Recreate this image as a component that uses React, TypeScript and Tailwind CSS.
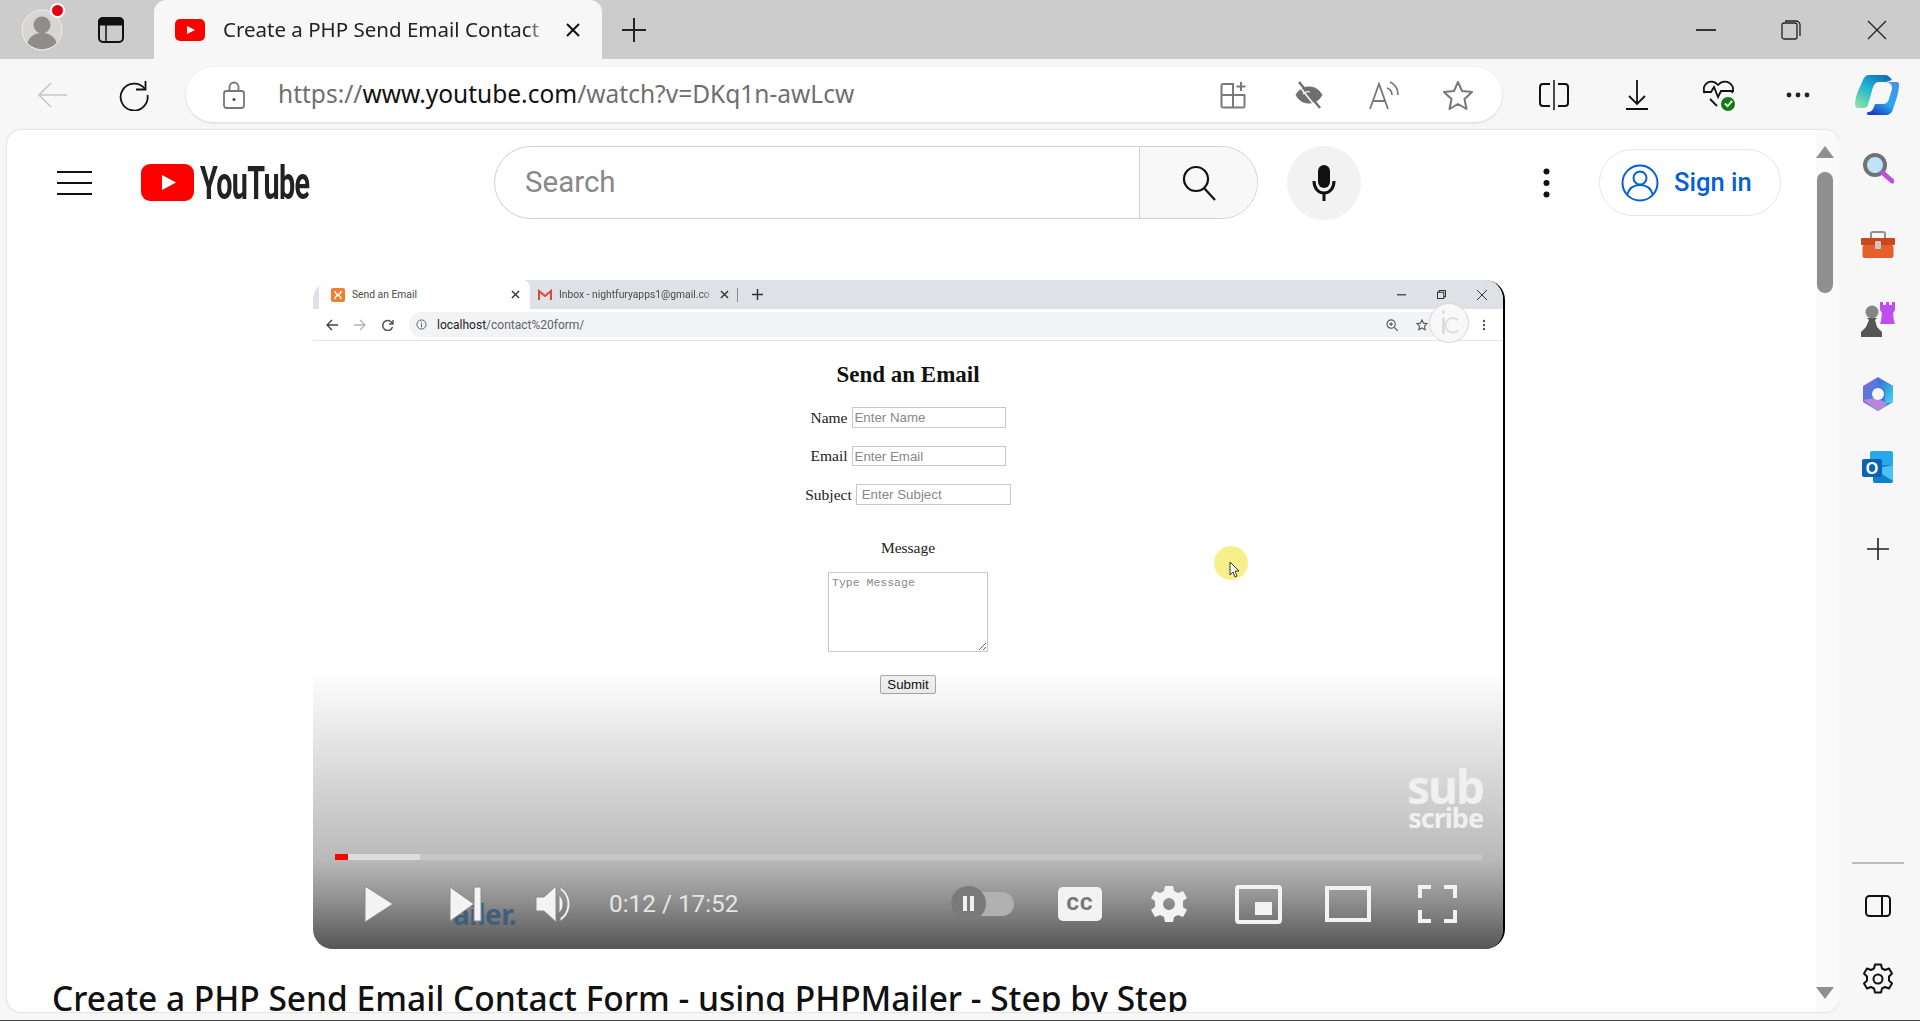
const TabStrip = () => (
  <div className="flex h-[59px] items-center bg-[#cccccc]">
    <div className="relative ml-[21px] h-[42px] w-[42px]">
      <svg viewBox="0 0 42 42" className="h-[42px] w-[42px]">
        <circle cx="21" cy="21" r="20" fill="#d8d6d3" stroke="#eeeeee" />
        <circle cx="21" cy="16" r="8.500" fill="#8f8c89" />
        <path d="M6.500 34c2-7 8-10 14.500-10s12.500 3 14.500 10a20 20 0 0 1-29 0z" fill="#8f8c89" />
      </svg>
      <span className="absolute right-[-2px] top-[-6px] h-[15px] w-[15px] rounded-full border-2 border-white bg-[#e3000f]"></span>
    </div>
    <svg viewBox="0 0 26 26" className="ml-[35px] h-[26px] w-[26px]" fill="none" stroke="#111111" strokeWidth="2">
      <rect x="1" y="1" width="24" height="24" rx="4" />
      <path d="M8 7v18" strokeWidth="1.500" />
      <path d="M4 1.500h18a3 3 0 0 1 3 3v3H1v-3a3 3 0 0 1 3-3z" fill="#111111" />
    </svg>
    <div className="ml-[30px] flex h-[59px] w-[448px] items-center rounded-t-[12px] bg-[#f7f7f7] pl-[21px]">
      <svg viewBox="0 0 30 22" className="h-[22px] w-[30px] shrink-0">
        <rect width="30" height="22" rx="5" fill="#ff0000" />
        <path d="M12 7l8 4-8 4z" fill="#ffffff" />
      </svg>
      <span className="ml-[18px] w-[326px] overflow-hidden whitespace-nowrap font-['Noto_Sans',sans-serif] text-[20.500px] text-[#222222] [mask-image:linear-gradient(to_right,black_93%,transparent)]">
        Create a PHP Send Email Contact
      </span>
      <svg viewBox="0 0 16 16" className="ml-[16px] h-[16px] w-[16px]" stroke="#111111" strokeWidth="2">
        <path d="M2 2l12 12M14 2L2 14" />
      </svg>
    </div>
    <svg viewBox="0 0 26 26" className="ml-[19px] h-[26px] w-[26px]" stroke="#222222" strokeWidth="2">
      <path d="M13 1v24M1 13h24" />
    </svg>
    <svg viewBox="0 0 20 2" className="ml-[1049px] h-[2px] w-[20px]">
      <rect width="20" height="2" fill="#333333" />
    </svg>
    <svg viewBox="0 0 20 20" className="ml-[65px] h-[20px] w-[20px]" fill="none" stroke="#222222" strokeWidth="1.300">
      <rect x="1" y="3" width="15" height="16" rx="2" />
      <path d="M4 1h11a4 4 0 0 1 4 4v11" />
    </svg>
    <svg viewBox="0 0 20 20" className="ml-[66px] h-[20px] w-[20px]" stroke="#222222" strokeWidth="1.300">
      <path d="M1 1l18 18M19 1L1 19" />
    </svg>
  </div>
)

const AddressBar = () => (
  <div className="ml-[36px] flex h-[55px] w-[1316px] items-center rounded-full bg-white pl-[37px] shadow-[0_1px_3px_rgba(0,0,0,0.12)]">
    <svg viewBox="0 0 22 28" className="h-[28px] w-[22px]" fill="none" stroke="#777777" strokeWidth="1.800">
      <rect x="1" y="10" width="20" height="17" rx="2.500" />
      <path d="M6.500 10V6a4.500 4.500 0 0 1 9 0v4" />
      <circle cx="11" cy="18.500" r="1.500" fill="#444444" stroke="none" />
    </svg>
    <span className="ml-[33px] w-[720px] whitespace-nowrap font-['Noto_Sans',sans-serif] text-[24.500px] text-[#6f6f6f]">
      https://<span className="text-[#111111]">www.youtube.com</span>/watch?v=DKq1n-awLcw
    </span>
    <svg viewBox="0 0 28 28" className="ml-[222px] h-[28px] w-[28px]" fill="none" stroke="#7a7a7a" strokeWidth="2">
      <path d="M13 3H3a1.500 1.500 0 0 0-1.500 1.500V25A1.500 1.500 0 0 0 3 26.500h20a1.500 1.500 0 0 0 1.500-1.500V14H13V3zM13 14H1.500M13 14v12.500" />
      <path d="M21 1v9M16.500 5.500h9" />
    </svg>
    <svg viewBox="0 0 30 30" className="ml-[46px] h-[30px] w-[30px]" fill="none" stroke="#707070">
      <path d="M2 15C6 8 11 7 15 7s9 1 13 8c-4 7-9 8-13 8S6 22 2 15z" fill="#707070" />
      <path d="M5 2l21 26" stroke="#707070" strokeWidth="2.500" />
      <path d="M3 3.500l21 26" stroke="#ffffff" strokeWidth="1.500" />
      <path d="M9 14c2-2 4-3 7-2" stroke="#f3f3f3" strokeWidth="1.200" />
    </svg>
    <svg viewBox="0 0 32 30" className="ml-[45px] h-[30px] w-[32px]" fill="none" stroke="#777777" strokeWidth="1.800">
      <path d="M1 29L10 4l9 25M4 21h12" />
      <path d="M18 8c3 1 5 4 5 7M21 2c5 2 8 7 8 13" />
    </svg>
    <svg viewBox="0 0 30 30" className="ml-[42px] h-[30px] w-[30px]" fill="none" stroke="#777777" strokeWidth="2">
      <path d="M15 2l4 9 10 1-7.500 7 2 10-8.500-5-8.500 5 2-10L1 12l10-1z" strokeLinejoin="round" />
    </svg>
  </div>
)

const Toolbar = () => (
  <div className="flex h-[71px] items-center bg-[#f7f7f7]">
    <svg viewBox="0 0 30 26" className="ml-[37px] h-[26px] w-[30px]" fill="none" stroke="#c8c8c8" strokeWidth="1.700">
      <path d="M30 13H2M14 1L2 13l12 12" />
    </svg>
    <svg viewBox="0 0 32 32" className="ml-[51px] h-[32px] w-[32px]" fill="none" stroke="#111111" strokeWidth="1.800">
      <path d="M27.500 2v8.500H18" />
      <path d="M27 10A13.500 13.500 0 1 0 29.500 16" />
    </svg>
    <AddressBar />
    <svg viewBox="0 0 30 30" className="ml-[37px] h-[30px] w-[30px]" fill="none" stroke="#111111" strokeWidth="2">
      <path d="M11 4H4a3 3 0 0 0-3 3v16a3 3 0 0 0 3 3h7M19 4h7a3 3 0 0 1 3 3v16a3 3 0 0 1-3 3h-7" />
      <path d="M15 0v30" strokeWidth="1.500" />
    </svg>
    <svg viewBox="0 0 22 30" className="ml-[57px] h-[30px] w-[22px]" fill="none" stroke="#111111" strokeWidth="1.800">
      <path d="M11 0v24M3 16l8 8 8-8M0 29h22" />
    </svg>
    <div className="relative ml-[54px] h-[32px] w-[33px]">
      <svg viewBox="0 0 33 32" className="h-[32px] w-[33px]" fill="none" stroke="#111111" strokeWidth="1.800">
        <path d="M15 27L8 20M3 14C-2 6 9-2 16 6c7-8 19 0 14 8" />
        <path d="M1 13h8l3-5 4 10 3-6h13" />
      </svg>
      <span className="absolute bottom-[0px] right-[0px] flex h-[14px] w-[14px] items-center justify-center rounded-full bg-[#107c10]">
        <svg viewBox="0 0 10 10" className="h-[9px] w-[9px]" fill="none" stroke="#ffffff" strokeWidth="2">
          <path d="M1 5l3 3 5-6" />
        </svg>
      </span>
    </div>
    <svg viewBox="0 0 24 6" className="ml-[51px] h-[6px] w-[24px]" fill="#222222">
      <circle cx="3" cy="3" r="2.400" />
      <circle cx="12" cy="3" r="2.400" />
      <circle cx="21" cy="3" r="2.400" />
    </svg>
    <svg viewBox="0 0 44 40" className="ml-[45px] h-[40px] w-[44px]">
      <defs>
        <linearGradient id="cop1" x1="0.100" y1="1" x2="0.800" y2="0">
          <stop offset="0" stopColor="#92e2a0" />
          <stop offset="0.500" stopColor="#22b8cf" />
          <stop offset="1" stopColor="#0b6fc0" />
        </linearGradient>
        <linearGradient id="cop2" x1="0.900" y1="0" x2="0.300" y2="1">
          <stop offset="0" stopColor="#4a8fe8" />
          <stop offset="0.600" stopColor="#2aa8ee" />
          <stop offset="1" stopColor="#1d3fc4" />
        </linearGradient>
      </defs>
      <path d="M14 0h16c3 0 5 2 7 5l-6 2H24c-3 0-5 2-6 5l-5 18c-1 3-3 3-6 3H3c-2 0-3-2-3-4 0-3 1-8 3-13L8 5c1-3 3-5 6-5z" fill="url(#cop1)" />
      <path d="M28 7h14c2 0 2 2 2 3 0 4-1 9-3 15l-3 9c-1 4-4 6-7 6H14c-2 0-3-2-1-3 3 0 5-2 6-5l1-3h8c3 0 5-2 6-5l3-10c1-4-3-7-6-7z" fill="url(#cop2)" />
    </svg>
  </div>
)

const Hamburger = () => (
  <svg viewBox="0 0 35 24" className="ml-[50px] h-[24px] w-[35px]" fill="#111111">
    <rect y="0" width="35" height="2" />
    <rect y="11" width="35" height="2" />
    <rect y="22" width="35" height="2" />
  </svg>
)

const Logo = () => (
  <div className="ml-[49px] flex h-[40px] w-[170px] items-center">
    <svg viewBox="0 0 53 37" className="h-[37px] w-[53px] shrink-0">
      <rect width="53" height="37" rx="9" fill="#ff0000" />
      <path d="M21 11l14 7.500L21 26z" fill="#ffffff" />
    </svg>
    <span className="ml-[6px] origin-left scale-x-[0.625] font-['Roboto',sans-serif] text-[46px] font-bold leading-none tracking-[-1px] text-[#222222]">
      YouTube
    </span>
  </div>
)

const SearchBox = () => (
  <div className="ml-[183px] flex h-[73px] w-[764px] overflow-hidden rounded-full border border-[#cfcfcf]">
    <div className="flex w-[644px] items-center pl-[30px] font-['Roboto',sans-serif] text-[29.500px] text-[#888888]">Search</div>
    <div className="flex flex-1 items-center justify-center border-l border-[#d3d3d3] bg-[#f8f8f8]">
      <svg viewBox="0 0 34 36" className="h-[36px] w-[34px]" fill="none" stroke="#111111" strokeWidth="2.200">
        <circle cx="14" cy="14" r="12" />
        <path d="M22 23l11 12" />
      </svg>
    </div>
  </div>
)

const PageHeader = () => (
  <div className="flex h-[105px] items-center">
    <Hamburger />
    <Logo />
    <SearchBox />
    <div className="ml-[29px] flex h-[74px] w-[74px] items-center justify-center rounded-full bg-[#f2f2f2]">
      <svg viewBox="0 0 24 38" className="h-[38px] w-[24px]" fill="none">
        <rect x="6" y="1" width="12" height="23" rx="6" fill="#111111" />
        <path d="M2 17c0 7 4 12 10 12s10-5 10-12M12 29v8" stroke="#111111" strokeWidth="3" />
      </svg>
    </div>
    <svg viewBox="0 0 7 30" className="ml-[182px] h-[30px] w-[7px]" fill="#111111">
      <circle cx="3.500" cy="3.500" r="3" />
      <circle cx="3.500" cy="15" r="3" />
      <circle cx="3.500" cy="26.500" r="3" />
    </svg>
    <div className="ml-[49px] flex h-[67px] w-[182px] items-center rounded-full border border-[#e5e5e5] pl-[21px]">
      <svg viewBox="0 0 38 38" className="h-[38px] w-[38px]" fill="none" stroke="#065fd4" strokeWidth="2">
        <circle cx="19" cy="19" r="17.500" />
        <circle cx="19" cy="14" r="6.500" />
        <path d="M6 31c2-7 7-10 13-10s11 3 13 10" />
      </svg>
      <span className="ml-[15px] whitespace-nowrap font-['Roboto',sans-serif] text-[25.500px] font-medium text-[#065fd4]">Sign in</span>
    </div>
  </div>
)

const CapturedTabs = () => (
  <div className="flex h-[29px] items-center bg-[#dee1e6] font-['Roboto',sans-serif] text-[10.300px] text-[#4a4a4a]">
    <div className="ml-[6px] flex h-[29px] w-[211px] items-center rounded-t-[8px] bg-white pl-[12px]">
      <svg viewBox="0 0 14 14" className="h-[14px] w-[14px]">
        <rect width="14" height="14" rx="2" fill="#f08030" />
        <path d="M4 3c0 3 2 3 3 4 1-1 3-1 3-4M4 11c0-3 2-3 3-4 1 1 3 1 3 4" stroke="#ffffff" strokeWidth="1.500" fill="none" />
      </svg>
      <span className="ml-[7px] w-[159px] whitespace-nowrap">Send an Email</span>
      <svg viewBox="0 0 10 10" className="h-[9px] w-[9px]" stroke="#333333" strokeWidth="1.500">
        <path d="M1 1l8 8M9 1L1 9" />
      </svg>
    </div>
    <svg viewBox="0 0 14 11" className="ml-[8px] h-[11px] w-[14px]" fill="none" stroke="#d9483b" strokeWidth="2">
      <path d="M1 11V2l6 5 6-5v9" />
    </svg>
    <span className="ml-[7px] w-[156px] overflow-hidden whitespace-nowrap [mask-image:linear-gradient(to_right,black_92%,transparent)]">Inbox - nightfuryapps1@gmail.co</span>
    <svg viewBox="0 0 10 10" className="ml-[5px] h-[9px] w-[9px]" stroke="#333333" strokeWidth="1.500">
      <path d="M1 1l8 8M9 1L1 9" />
    </svg>
    <span className="ml-[8px] h-[14px] w-px bg-[#8a8a8a]"></span>
    <svg viewBox="0 0 12 12" className="ml-[14px] h-[11px] w-[11px]" stroke="#333333" strokeWidth="1.600">
      <path d="M6 0v12M0 6h12" />
    </svg>
    <svg viewBox="0 0 10 2" className="ml-[634px] h-[2px] w-[9px]" fill="#444444">
      <rect width="10" height="1.500" />
    </svg>
    <svg viewBox="0 0 10 10" className="ml-[31px] h-[9px] w-[9px]" fill="none" stroke="#333333" strokeWidth="1.200">
      <rect x="0.500" y="2.500" width="7" height="7" />
      <path d="M2.500 2.500v-2h7v7h-2" />
    </svg>
    <svg viewBox="0 0 10 10" className="ml-[31px] h-[10px] w-[10px]" stroke="#333333" strokeWidth="1">
      <path d="M0 0l10 10M10 0L0 10" />
    </svg>
  </div>
)

const CapturedToolbar = () => (
  <div className="flex h-[32px] items-center border-b border-[#e2e4e7] bg-white font-['Roboto',sans-serif] text-[12px] text-[#5f6368]">
    <svg viewBox="0 0 12 12" className="ml-[13px] h-[12px] w-[12px]" fill="none" stroke="#444444" strokeWidth="1.400">
      <path d="M12 6H1M6 1L1 6l5 5" />
    </svg>
    <svg viewBox="0 0 12 12" className="ml-[16px] h-[12px] w-[12px]" fill="none" stroke="#b5b5b5" strokeWidth="1.400">
      <path d="M0 6h11M6 1l5 5-5 5" />
    </svg>
    <svg viewBox="0 0 12 12" className="ml-[16px] h-[12px] w-[12px]" fill="none" stroke="#555555" strokeWidth="1.500">
      <path d="M11 1v4H7M10.500 5A5 5 0 1 0 10.500 8" />
    </svg>
    <div className="ml-[15px] flex h-[25px] w-[1035px] items-center rounded-l-full bg-[#f1f3f4] pl-[7px]">
      <svg viewBox="0 0 12 12" className="h-[11px] w-[11px]" fill="none" stroke="#555555">
        <circle cx="6" cy="6" r="5" />
        <path d="M6 5v4M6 3v1" />
      </svg>
      <span className="ml-[10px] w-[147px] whitespace-nowrap">
        <span className="text-[#222222]">localhost</span>/contact%20form/
      </span>
      <svg viewBox="0 0 13 13" className="ml-[802px] h-[12px] w-[12px]" fill="none" stroke="#555555" strokeWidth="1.200">
        <circle cx="5.500" cy="5.500" r="4.500" />
        <path d="M9 9l4 4M3.500 5.500h4M5.500 3.500v4" />
      </svg>
      <svg viewBox="0 0 13 13" className="ml-[18px] h-[12px] w-[12px]" fill="none" stroke="#555555" strokeWidth="1.200">
        <path d="M6.500 1l1.700 3.500 3.800.5-2.800 2.700.7 3.800-3.400-1.800-3.400 1.800.7-3.800L1 5l3.800-.5z" />
      </svg>
    </div>
    <svg viewBox="0 0 4 12" className="ml-[38px] h-[12px] w-[4px]" fill="#555555">
      <circle cx="2" cy="2" r="1.200" />
      <circle cx="2" cy="6" r="1.200" />
      <circle cx="2" cy="10" r="1.200" />
    </svg>
  </div>
)

const ContactForm = () => (
  <div className="flex flex-col items-center bg-white font-['Liberation_Serif',serif] text-[15.500px] text-[#222222]">
    <h1 className="mt-[19px] h-[30px] text-[23px] font-bold leading-[30px] text-[#111111]">Send an Email</h1>
    <div className="mt-[17px] flex h-[21px] items-center gap-[4px]">
      <label>Name</label>
      <input placeholder="Enter Name" className="h-[21px] w-[154px] border border-[#c8c8c8] px-[2px] font-['Liberation_Sans',sans-serif] text-[13.300px] outline-none placeholder:text-[#888888]" />
    </div>
    <div className="mt-[18px] flex h-[20px] items-center gap-[4px]">
      <label>Email</label>
      <input placeholder="Enter Email" className="h-[20px] w-[154px] border border-[#c8c8c8] px-[2px] font-['Liberation_Sans',sans-serif] text-[13.300px] outline-none placeholder:text-[#888888]" />
    </div>
    <div className="mt-[18px] flex h-[21px] items-center gap-[4px]">
      <label>Subject</label>
      <input placeholder="Enter Subject" className="h-[21px] w-[155px] border border-[#c8c8c8] px-[5px] font-['Liberation_Sans',sans-serif] text-[13.300px] outline-none placeholder:text-[#888888]" />
    </div>
    <div className="mt-[33px] h-[20px] leading-[20px]">Message</div>
    <textarea placeholder="Type Message" className="mt-[14px] block h-[80px] w-[160px] border border-[#c8c8c8] px-[3px] py-[1px] font-['Liberation_Mono',monospace] text-[11.500px] outline-none placeholder:text-[#888888]"></textarea>
    <button type="button" className="mt-[23px] h-[19px] w-[56px] rounded-[2px] border border-[#a8a8a8] bg-[#f2f2f2] font-['Liberation_Sans',sans-serif] text-[13.300px] leading-none text-[#111111]">Submit</button>
  </div>
)

const PlayerControls = () => (
  <div className="absolute inset-x-0 bottom-0 pl-[22px]">
    <div className="flex h-[6px] w-[1147px] bg-[#c7c7c7]">
      <div className="w-[13px] bg-[#ff0000]"></div>
      <div className="w-[72px] bg-[#dedede]"></div>
    </div>
    <div className="mb-[8px] mt-[7px] flex h-[74px] items-center">
      <svg viewBox="0 0 30 38" className="ml-[29px] h-[38px] w-[30px]" fill="#f3f3f3" stroke="#8a8a8a" strokeWidth="1">
        <path d="M1 1l28 18L1 37z" />
      </svg>
      <div className="relative ml-[55px] h-[36px] w-[33px]">
        <span className="absolute left-[4px] top-[14px] font-['Noto_Sans',sans-serif] text-[28px] font-bold leading-none tracking-[-0.5px] text-[#3f5f7d]">ailer.</span>
        <svg viewBox="0 0 33 36" className="absolute inset-0 h-[36px] w-[33px]" fill="#f3f3f3" stroke="#8a8a8a" strokeWidth="1">
          <path d="M1 1l24 17L1 35z" />
          <rect x="25" y="1" width="7" height="34" />
        </svg>
      </div>
      <svg viewBox="0 0 36 40" className="ml-[53px] h-[40px] w-[36px]" fill="#f3f3f3" stroke="#8a8a8a" strokeWidth="1">
        <path d="M1 13h8L21 2v36L9 27H1z" />
        <path d="M24 11c3 2 4 6 4 9s-1 7-4 9z" />
        <path d="M25 3c6 3 10 10 10 17s-4 14-10 17v-3c5-3 7-9 7-14s-2-11-7-14z" />
      </svg>
      <span className="ml-[38px] w-[129px] whitespace-nowrap font-['Roboto',sans-serif] text-[24.300px] text-[#e6e6e6]">0:12 / 17:52</span>
      <div className="relative ml-[213px] h-[24px] w-[63px] rounded-full bg-[#b0b0b0]">
        <div className="absolute left-0 top-[-6px] flex h-[35px] w-[35px] items-center justify-center gap-[3px] rounded-full bg-[#7a7a7a]">
          <span className="h-[15px] w-[4px] bg-[#f1f1f1]"></span>
          <span className="h-[15px] w-[4px] bg-[#f1f1f1]"></span>
        </div>
      </div>
      <div className="ml-[44px] flex h-[34px] w-[44px] items-center justify-center rounded-[5px] bg-[#f3f3f3] font-['Roboto',sans-serif] text-[19px] font-black tracking-[1px] text-[#777777]">CC</div>
      <svg viewBox="0 0 38 38" className="ml-[48px] h-[38px] w-[38px]" fill="#f3f3f3">
        <path fillRule="evenodd" d="M15 1h8l1 5 4 2 5-2 4 7-4 3v6l4 3-4 7-5-2-4 2-1 5h-8l-1-5-4-2-5 2-4-7 4-3v-6l-4-3 4-7 5 2 4-2zM19 13a6 6 0 1 0 0 12 6 6 0 0 0 0-12z" />
      </svg>
      <svg viewBox="0 0 47 39" className="ml-[47px] h-[39px] w-[47px]" fill="none" stroke="#f3f3f3" strokeWidth="4">
        <rect x="2" y="2" width="43" height="35" rx="2" />
        <rect x="20" y="17" width="17" height="13" fill="#f3f3f3" stroke="none" />
      </svg>
      <svg viewBox="0 0 46 36" className="ml-[43px] h-[36px] w-[46px]" fill="none" stroke="#f3f3f3" strokeWidth="4">
        <rect x="2" y="2" width="42" height="32" />
      </svg>
      <svg viewBox="0 0 39 38" className="ml-[47px] h-[38px] w-[39px]" fill="none" stroke="#f3f3f3" strokeWidth="4">
        <path d="M2 13V2h11M26 2h11v11M37 25v11H26M13 36H2V25" />
      </svg>
    </div>
  </div>
)

const VideoPlayer = () => (
  <div className="relative ml-[306px] mt-[45px] h-[669px] w-[1192px] overflow-hidden rounded-[20px] border-r-2 border-black bg-white">
    <CapturedTabs />
    <CapturedToolbar />
    <ContactForm />
    {/* channel watermark over the toolbar */}
    <div className="absolute left-[1116px] top-[23px] flex h-[40px] w-[40px] items-center justify-center rounded-full border border-[#d6d6d6] bg-[#f8f8f8]">
      <svg viewBox="0 0 24 28" className="h-[26px] w-[22px]" fill="none" stroke="#dcdcdc" strokeWidth="3">
        <path d="M6 0v4M6 8v18" />
        <path d="M22 11a8 8 0 1 0 0 11" strokeWidth="2" />
      </svg>
    </div>
    {/* cursor highlight */}
    <div className="absolute left-[901px] top-[266px] h-[34px] w-[34px] rounded-full bg-[#f7ef8b]"></div>
    <svg viewBox="0 0 12 18" className="absolute left-[916px] top-[281px] h-[18px] w-[12px]" fill="#ffffff" stroke="#333333">
      <path d="M1 1v13l3-3 2 5 2-1-2-5h4z" />
    </svg>
    {/* bottom shade */}
    <div className="absolute inset-x-0 bottom-0 h-[279px] bg-[linear-gradient(to_bottom,rgba(0,0,0,0)_0%,rgba(0,0,0,0.1)_25%,rgba(0,0,0,0.275)_68%,rgba(0,0,0,0.43)_82%,rgba(0,0,0,0.667)_100%)]"></div>
    <div className="absolute right-[20px] top-[487px] text-right font-['Noto_Sans',sans-serif] font-bold text-[#f0f0f0]">
      <div className="text-[46px] leading-[38px] tracking-[-2px]">sub</div>
      <div className="text-[27px] leading-[26px] tracking-[-1px]">scribe</div>
    </div>
    <PlayerControls />
  </div>
)

const Scrollbar = () => (
  <div className="flex w-[23px] flex-col items-center bg-[#fafafa] pr-[5px] pt-[16px]">
    <svg viewBox="0 0 18 12" className="h-[12px] w-[18px]" fill="#8f8f8f">
      <path d="M9 0l9 12H0z" />
    </svg>
    <div className="mt-[14px] h-[121px] w-[16px] rounded-full bg-[#8f8f8f]"></div>
    <svg viewBox="0 0 18 12" className="mb-[13px] mt-auto h-[12px] w-[18px]" fill="#8f8f8f">
      <path d="M0 0h18L9 12z" />
    </svg>
  </div>
)

const Sidebar = () => (
  <div className="flex flex-1 flex-col items-center bg-[#f7f7f7] pr-[3px]">
    <svg viewBox="0 0 32 32" className="mt-[22px] h-[32px] w-[32px]">
      <circle cx="13" cy="13" r="10" fill="#bfe3f7" stroke="#6f7376" strokeWidth="4" />
      <path d="M21 21l9 8" stroke="#c14de0" strokeWidth="5" strokeLinecap="round" />
    </svg>
    <svg viewBox="0 0 34 28" className="mt-[47px] h-[28px] w-[34px]">
      <path d="M10 8V3a2 2 0 0 1 2-2h10a2 2 0 0 1 2 2v5" fill="none" stroke="#909090" strokeWidth="2" />
      <rect y="7" width="34" height="7" rx="1" fill="#c8491a" />
      <rect x="1.500" y="14" width="31" height="13" rx="2" fill="#e5602a" />
      <rect x="14" y="10" width="6" height="8" rx="1" fill="#c9c9c9" />
    </svg>
    <svg viewBox="0 0 34 36" className="mt-[42px] h-[36px] w-[34px]">
      <path d="M19 1h3v3h3V1h3v3h3V1h3v8l-2 3 1 8 1 3H19l1-3 1-8-2-3z" fill="#c04cf2" />
      <circle cx="11" cy="11" r="6.500" fill="#858585" />
      <path d="M6 17h10l-2 2 2 7 5 5v5H0v-5l5-5 3-7z" fill="#555555" />
    </svg>
    <svg viewBox="0 0 32 34" className="mt-[40px] h-[34px] w-[32px]">
      <defs>
        <linearGradient id="m1" x1="0" y1="0" x2="1" y2="0.600">
          <stop offset="0" stopColor="#7a6fe0" />
          <stop offset="1" stopColor="#2b7fd6" />
        </linearGradient>
        <linearGradient id="m2" x1="0" y1="0" x2="1" y2="1">
          <stop offset="0" stopColor="#1a6fc4" />
          <stop offset="1" stopColor="#50d6f5" />
        </linearGradient>
      </defs>
      <path d="M16 0l15 9v16L16 34 1 25V9z" fill="url(#m1)" />
      <path d="M14 2l17 7v16l-8 2V13z" fill="url(#m2)" />
      <path d="M1 23l12-2 10 4 2 3-9 6z" fill="#b787dd" />
      <circle cx="16" cy="17" r="6" fill="#f7f7f7" />
    </svg>
    <svg viewBox="0 0 32 32" className="mt-[40px] h-[32px] w-[32px]">
      <rect x="8" y="0" width="23" height="17" rx="2" fill="#28a8ea" />
      <path d="M11 14h20v16a2 2 0 0 1-2 2H13a2 2 0 0 1-2-2z" fill="#0f7fd0" />
      <path d="M12 18l19-4v16z" fill="#50c0f0" />
      <rect x="0" y="8" width="20" height="18" rx="2" fill="#0a62b5" />
      <text x="10" y="23" textAnchor="middle" fontSize="16" fontWeight="700" fill="#ffffff" fontFamily="Liberation Sans">O</text>
    </svg>
    <svg viewBox="0 0 22 22" className="mt-[55px] h-[22px] w-[22px]" stroke="#222222" strokeWidth="1.600">
      <path d="M11 0v22M0 11h22" />
    </svg>
    <div className="mt-auto h-[2px] w-[52px] bg-[#bdbdbd]"></div>
    <svg viewBox="0 0 26 22" className="mt-[31px] h-[22px] w-[26px]" fill="none" stroke="#111111" strokeWidth="2">
      <rect x="1" y="1" width="24" height="20" rx="3.500" />
      <path d="M17 1v20" />
    </svg>
    <svg viewBox="0 0 32 32" className="mb-[25px] mt-[46px] h-[32px] w-[32px]" fill="none" stroke="#111111" strokeWidth="2">
      <path d="M13 1.500h6l1 4 3 1.500 4-1.500 3 5-3 3v4l3 3-3 5-4-1.500-3 1.500-1 4h-6l-1-4-3-1.500-4 1.500-3-5 3-3v-4l-3-3 3-5 4 1.500 3-1.500z" strokeLinejoin="round" />
      <circle cx="16" cy="16" r="4.500" />
    </svg>
  </div>
)

const App = () => {
  return (
    <div className="flex h-[1021px] w-[1920px] flex-col overflow-hidden bg-[#f7f7f7]">
      <TabStrip />
      <Toolbar />
      <div className="flex h-[891px] border-b border-[#444444]">
        <div className="mb-[8px] ml-[7px] flex w-[1832px] overflow-hidden rounded-[14px] bg-white shadow-[0_0_2px_rgba(0,0,0,0.25)]">
          <div className="min-w-0 flex-1">
            <PageHeader />
            <VideoPlayer />
            <h2 className="ml-[45px] mt-[29px] whitespace-nowrap font-['Noto_Sans',sans-serif] text-[33.500px] font-medium leading-[40px] text-[#111111]">
              Create a PHP Send Email Contact Form - using PHPMailer - Step by Step
            </h2>
          </div>
          <Scrollbar />
        </div>
        <Sidebar />
      </div>
    </div>
  )
}

export default App
